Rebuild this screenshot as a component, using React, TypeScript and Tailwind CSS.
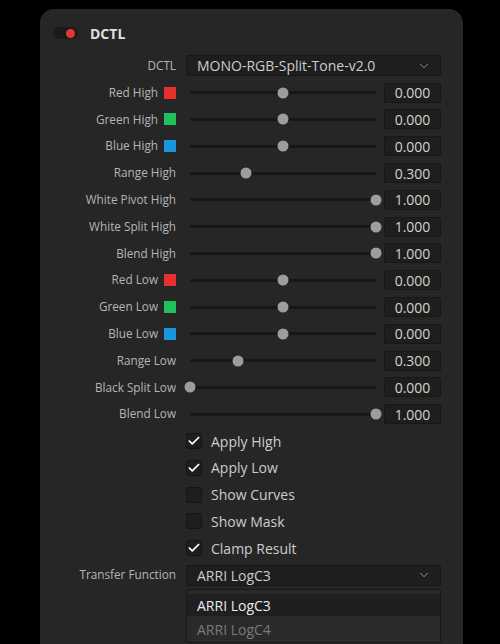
import { Check, ChevronDown } from "lucide-react";

type SliderRow = {
  label: string;
  swatch?: string;
  pos: number;
  value: string;
};

const sliders: SliderRow[] = [
  { label: "Red High", swatch: "bg-[#e8302f]", pos: 0.5, value: "0.000" },
  { label: "Green High", swatch: "bg-[#1fc25a]", pos: 0.5, value: "0.000" },
  { label: "Blue High", swatch: "bg-[#1b95e0]", pos: 0.5, value: "0.000" },
  { label: "Range High", pos: 0.3, value: "0.300" },
  { label: "White Pivot High", pos: 1, value: "1.000" },
  { label: "White Split High", pos: 1, value: "1.000" },
  { label: "Blend High", pos: 1, value: "1.000" },
  { label: "Red Low", swatch: "bg-[#e8302f]", pos: 0.5, value: "0.000" },
  { label: "Green Low", swatch: "bg-[#1fc25a]", pos: 0.5, value: "0.000" },
  { label: "Blue Low", swatch: "bg-[#1b95e0]", pos: 0.5, value: "0.000" },
  { label: "Range Low", pos: 0.257, value: "0.300" },
  { label: "Black Split Low", pos: 0, value: "0.000" },
  { label: "Blend Low", pos: 1, value: "1.000" },
];

const toggles = [
  { label: "Apply High", checked: true },
  { label: "Apply Low", checked: true },
  { label: "Show Curves", checked: false },
  { label: "Show Mask", checked: false },
  { label: "Clamp Result", checked: true },
];

function Row({ label, children }: { label?: React.ReactNode; children: React.ReactNode }) {
  return (
    <div className="flex h-[26.8px] items-center">
      <div className="flex w-[136px] items-center justify-end text-[11.75px] text-[#b5b5b5]">{label}</div>
      <div className="ml-[10px] flex w-[255px] items-center">{children}</div>
    </div>
  );
}

function Select({ value }: { value: string }) {
  return (
    <div className="flex h-[21px] w-full items-center justify-between rounded-[2px] border border-[#171717] bg-[#1e1e1e] pl-[10px] pr-[9px] text-[14px] text-[#cdcdcd]">
      <span>{value}</span>
      <ChevronDown className="h-[14px] w-[14px] text-[#9a9a9a]" strokeWidth={1.6} />
    </div>
  );
}

function Slider({ pos, value }: { pos: number; value: string }) {
  return (
    <>
      <div className="w-[194px] px-[4px]">
        <div className="relative h-[3px] rounded-full bg-[#171717]">
          <div
            className="absolute top-1/2 h-[11px] w-[11px] -translate-x-1/2 -translate-y-1/2 rounded-full bg-[#9d9d9d]"
            style={{ left: `${pos * 100}%` }}
          />
        </div>
      </div>
      <div className="ml-[4px] flex h-[20px] w-[57px] items-center justify-center rounded-[2px] border border-[#171717] bg-[#1e1e1e] text-[14px] text-[#d2d2d2]">
        {value}
      </div>
    </>
  );
}

export default function App() {
  return (
    <div
      className="h-[644px] w-[500px] overflow-hidden bg-black pt-[9px]"
      style={{ fontFamily: '"Open Sans", "Noto Sans", sans-serif' }}
    >
      <div className="ml-[40px] h-[700px] w-[423px] rounded-t-[14px] bg-[#262626] pt-[12px]">
        {/* header with enable switch */}
        <div className="flex h-[24px] items-center pl-[13px]">
          <div className="flex h-[12px] w-[25px] items-center justify-end rounded-full bg-[#1a1a1a] pr-[3px]">
            <div className="h-[9px] w-[9px] rounded-full bg-[#e23a32]" />
          </div>
          <span className="ml-[12px] text-[14px] font-bold text-[#e0e0e0]">DCTL</span>
        </div>

        <div className="mt-[7.5px]">
          <Row label="DCTL">
            <Select value="MONO-RGB-Split-Tone-v2.0" />
          </Row>

          {sliders.map((s) => (
            <Row
              key={s.label}
              label={
                <>
                  <span>{s.label}</span>
                  {s.swatch && <span className={`ml-[6px] h-[12px] w-[12px] ${s.swatch}`} />}
                </>
              }
            >
              <Slider pos={s.pos} value={s.value} />
            </Row>
          ))}

          {toggles.map((t) => (
            <Row key={t.label}>
              <div className="flex h-[16px] w-[16px] items-center justify-center rounded-[2px] border border-[#151515] bg-[#1e1e1e]">
                {t.checked && <Check className="h-[14px] w-[14px] text-white" strokeWidth={3} />}
              </div>
              <span className="ml-[9px] text-[14px] text-[#cdcdcd]">{t.label}</span>
            </Row>
          ))}

          <Row label="Transfer Function">
            <Select value="ARRI LogC3" />
          </Row>

          {/* open dropdown list */}
          <div className="ml-[146px] mt-[1px] w-[255px] rounded-[2px] border border-[#171717] bg-[#2a2a2a] pt-[4px]">
            <div className="flex h-[22px] items-center bg-[#1f1f1f] pl-[10px] text-[14px] text-[#ececec]">
              ARRI LogC3
            </div>
            <div className="flex h-[26px] items-center pl-[10px] text-[14px] text-[#7a7a7a]">ARRI LogC4</div>
          </div>
        </div>
      </div>
    </div>
  );
}
